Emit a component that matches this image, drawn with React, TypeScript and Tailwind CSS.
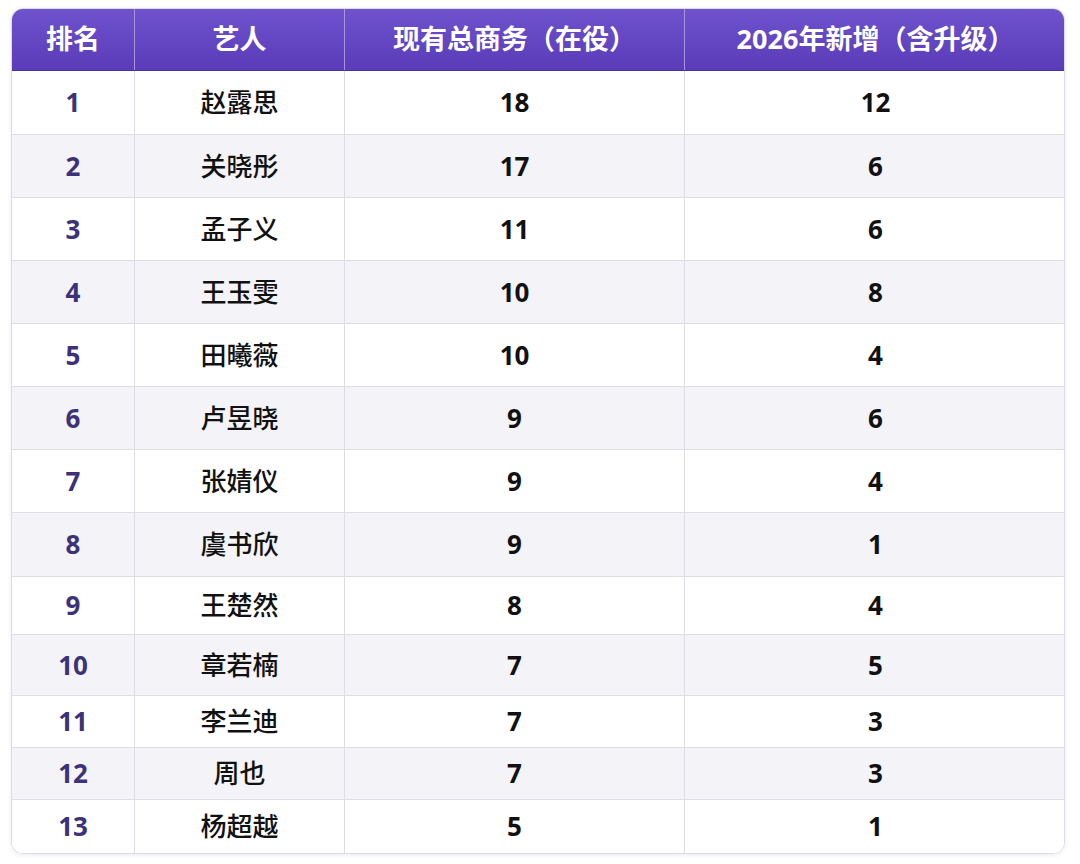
import React from "react";

const rows = [
  { rank: 1, name: "赵露思", total: 18, added: 12, h: "h-[64px]" },
  { rank: 2, name: "关晓彤", total: 17, added: 6, h: "h-[63px]" },
  { rank: 3, name: "孟子义", total: 11, added: 6, h: "h-[63px]" },
  { rank: 4, name: "王玉雯", total: 10, added: 8, h: "h-[63px]" },
  { rank: 5, name: "田曦薇", total: 10, added: 4, h: "h-[63px]" },
  { rank: 6, name: "卢昱晓", total: 9, added: 6, h: "h-[63px]" },
  { rank: 7, name: "张婧仪", total: 9, added: 4, h: "h-[63px]" },
  { rank: 8, name: "虞书欣", total: 9, added: 1, h: "h-[64px]" },
  { rank: 9, name: "王楚然", total: 8, added: 4, h: "h-[58px]" },
  { rank: 10, name: "章若楠", total: 7, added: 5, h: "h-[61px]" },
  { rank: 11, name: "李兰迪", total: 7, added: 3, h: "h-[52px]" },
  { rank: 12, name: "周也", total: 7, added: 3, h: "h-[52px]" },
  { rank: 13, name: "杨超越", total: 5, added: 1, h: "h-[53px]" },
];

const font = "font-['Noto_Sans','Noto_Sans_CJK_SC',sans-serif]";

export default function App() {
  return (
    <div className={`min-h-[864px] w-[1080px] bg-white pl-[11px] pt-[8px] ${font}`}>
      <div className="w-[1054px] overflow-hidden rounded-[12px] border border-[#dcdce6] shadow-[0_1px_4px_rgba(80,70,140,0.12)]">
        {/* header */}
        <div className="grid h-[62px] grid-cols-[123px_210px_340px_381px] border-b border-[#4a2fa0] bg-gradient-to-b from-[#6f52cc] to-[#5a3bb9] text-[27px] font-bold text-white">
          <div className="flex items-center justify-center border-r border-[#a594e0]">排名</div>
          <div className="flex items-center justify-center border-r border-[#a594e0]">艺人</div>
          <div className="flex items-center justify-center border-r border-[#a594e0]">现有总商务（在役）</div>
          <div className="flex items-center justify-center">2026年新增（含升级）</div>
        </div>

        {rows.map((r, i) => (
          <div
            key={r.rank}
            className={`grid grid-cols-[123px_210px_340px_381px] text-[26px] ${r.h} ${i % 2 === 1 ? "bg-[#f3f3f8]" : "bg-white"} ${i < rows.length - 1 ? "border-b border-[#dddde5]" : ""}`}
          >
            <div className="flex items-center justify-center border-r border-[#dddde5] font-bold text-[#3b3278]">{r.rank}</div>
            <div className="flex items-center justify-center border-r border-[#dddde5] font-medium text-[#111]">{r.name}</div>
            <div className="flex items-center justify-center border-r border-[#dddde5] font-bold text-[#111]">{r.total}</div>
            <div className="flex items-center justify-center font-bold text-[#111]">{r.added}</div>
          </div>
        ))}
      </div>
    </div>
  );
}
